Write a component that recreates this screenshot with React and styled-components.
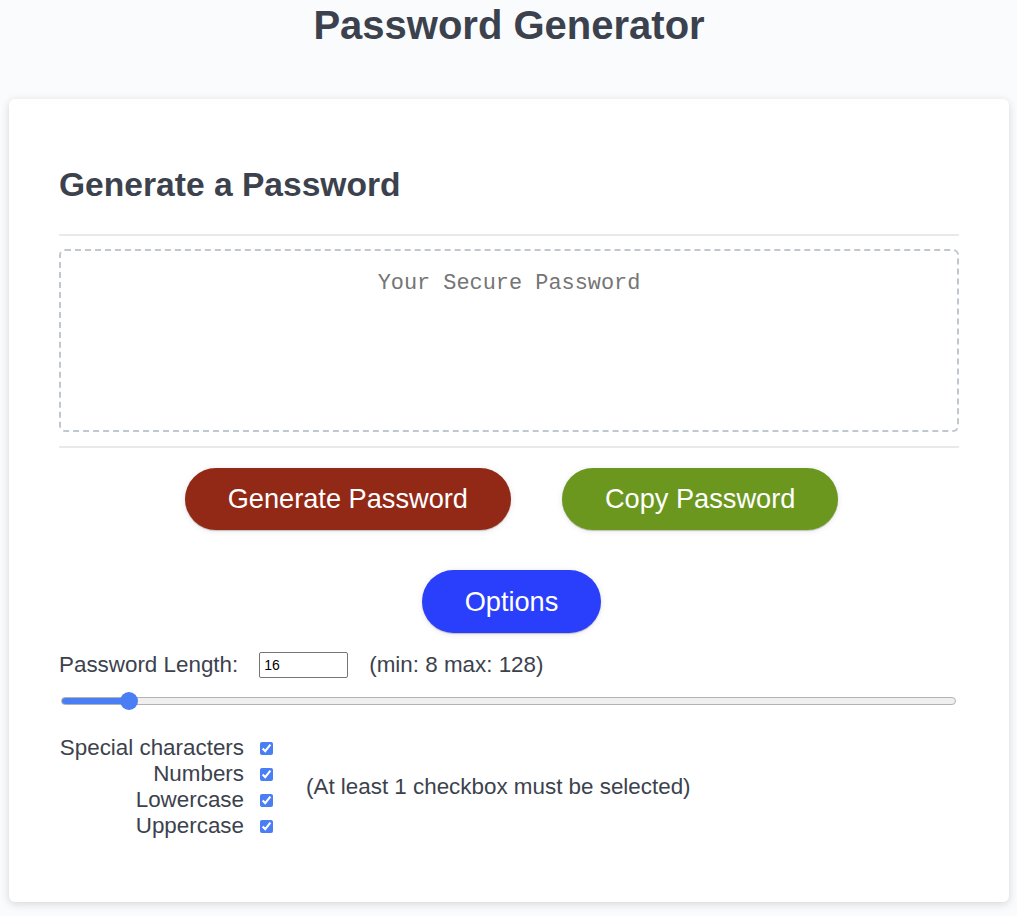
import React, { useState } from 'react'
import styled, { createGlobalStyle } from 'styled-components'

const GlobalStyle = createGlobalStyle`
*, *::before, *::after { box-sizing: border-box; }
html, body {
  margin : 0;
  padding : 0;
  background-color : #f9fbfd;
  font-family : "Liberation Sans", Arial, sans-serif;
}
`;

const Wrapper = styled.div`
padding : 3px 8px 14px 9px;
`;

const Header = styled.header`
text-align : center;
color : #3c424d;
h1 {
  margin : 0 0 51px;
  font-size : 40px;
  font-weight : 700;
}
`;

const Card = styled.div`
background-color : #fff;
border-radius : 6px;
box-shadow : rgba(0, 0, 0, 0.15) 0px 2px 8px 0px;
color : #3c424d;
padding : 39px 50px 63px;
`;

const CardTitle = styled.h2`
margin : 28px 0 30px;
font-size : 33.6px;
font-weight : 700;
`;

const Divider = styled.div`
height : 2px;
background : #e7e9eb;
`;

const PasswordBox = styled.textarea`
display : block;
width : 100%;
height : 183px;
margin : 13px 0 14px;
padding : 20px 15px;
font-family : "Liberation Mono", "DejaVu Sans Mono", monospace;
font-size : 21.9px;
text-align : center;
border : 2px dashed #c0c7cf;
border-radius : 6px;
resize : none;
overflow : hidden;
outline : none;
&::placeholder { color : #757575; }
`;

const ButtonRow = styled.div`
display : flex;
justify-content : center;
gap : 51px;
padding-left : 5px;
margin-top : ${props => props.top}px;
`;

const Button = styled.button`
border : none;
background-color : ${props => props.color};
border-radius : 32px;
box-shadow : rgba(0, 0, 0, 0.1) 0px 1px 6px 0px, rgba(0, 0, 0, 0.2) 0px 1px 1px 0px;
color : #fff;
font-family : "Liberation Sans", Arial, sans-serif;
font-size : 27.2px;
line-height : ${props => props.lh || 34}px;
padding : 14px 43px;
cursor : pointer;
`;

const LengthRow = styled.div`
display : flex;
align-items : center;
margin-top : 19px;
font-size : 22.4px;
line-height : 26px;
`;

const LengthInput = styled.input`
width : 89px;
height : 26px;
margin : 0 21px 0 21px;
padding : 1px 4px;
font-family : "Liberation Sans", Arial, sans-serif;
font-size : 14px;
border : 1px solid #767676;
border-radius : 2px;
color : #000;
`;

const Slider = styled.input`
-webkit-appearance : none;
appearance : none;
display : block;
width : 895px;
height : 18px;
margin : 14px 0 0 2px;
background : transparent;
outline : none;
&::-webkit-slider-runnable-track {
  height : 8px;
  border-radius : 4px;
  border : 1px solid #b2b2b2;
  background : linear-gradient(to right, #4a7ef5 0%, #4a7ef5 ${props => props.pct}%, #efefef ${props => props.pct}%);
}
&::-webkit-slider-thumb {
  -webkit-appearance : none;
  width : 18px;
  height : 18px;
  margin-top : -6px;
  border-radius : 50%;
  background : #4a7ef5;
  border : none;
}
`;

const OptionsArea = styled.div`
display : flex;
align-items : center;
margin-top : 25px;
font-size : 22.4px;
`;

const CheckList = styled.div`
display : grid;
grid-template-columns : 185px auto;
grid-auto-rows : 26px;
column-gap : 16px;
align-items : center;
`;

const CheckLabel = styled.label`
text-align : right;
white-space : nowrap;
line-height : 26px;
`;

const Check = styled.input`
width : 13px;
height : 13px;
margin : 0;
accent-color : #4a7ef5;
`;

const Note = styled.span`
margin-left : 33px;
`;

const options = ['Special characters', 'Numbers', 'Lowercase', 'Uppercase'];

const App = () => {
  const [length, setLength] = useState(16);
  const n = Math.min(128, Math.max(8, Number(length) || 8));
  const pct = 1 + ((n - 8) / 120) * 97;
  return (
    <Wrapper>
      <GlobalStyle />
      <Header>
        <h1>Password Generator</h1>
      </Header>
      <Card>
        <CardTitle>Generate a Password</CardTitle>
        <Divider />
        <PasswordBox readOnly placeholder="Your Secure Password" />
        <Divider />
        <ButtonRow top={20}>
          <Button color="#922816">Generate Password</Button>
          <Button color="#6b971f">Copy Password</Button>
        </ButtonRow>
        <ButtonRow top={40}>
          <Button color="#2a3ffc" lh={35}>Options</Button>
        </ButtonRow>
        <LengthRow>
          <span>Password Length:</span>
          <LengthInput type="text" value={length} onChange={e => setLength(e.target.value)} />
          <span>(min: 8 max: 128)</span>
        </LengthRow>
        <Slider type="range" min="8" max="128" value={n} pct={pct} onChange={e => setLength(e.target.value)} />
        <OptionsArea>
          <CheckList>
            {options.map(o => (
              <React.Fragment key={o}>
                <CheckLabel>{o}</CheckLabel>
                <Check type="checkbox" defaultChecked />
              </React.Fragment>
            ))}
          </CheckList>
          <Note>(At least 1 checkbox must be selected)</Note>
        </OptionsArea>
      </Card>
    </Wrapper>
  )
}

export default App
